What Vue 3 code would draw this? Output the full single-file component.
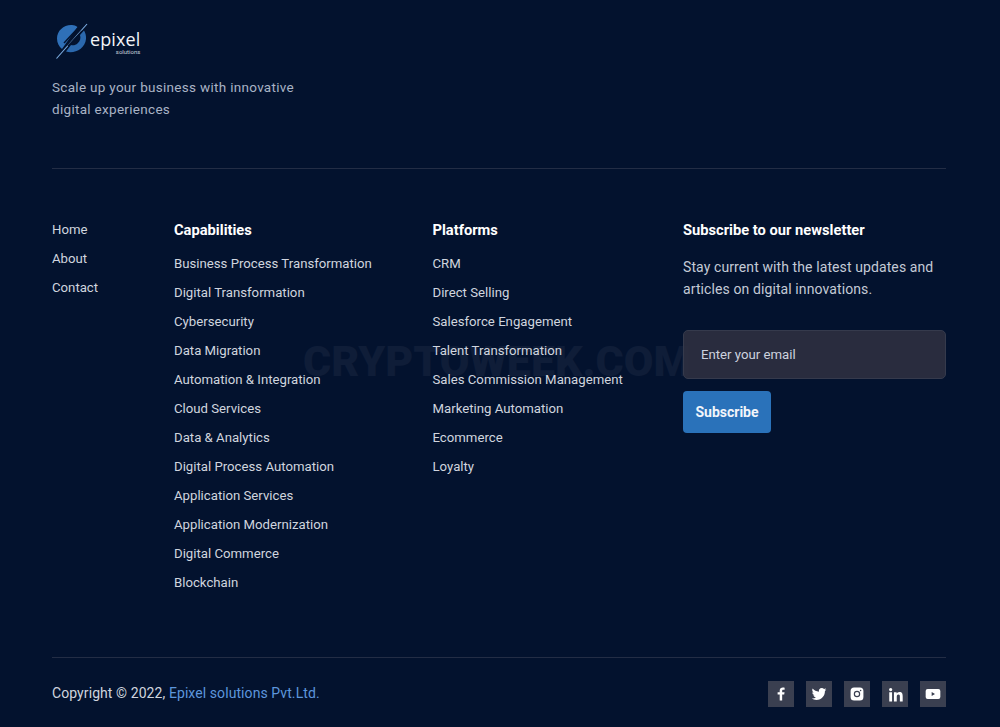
<script setup>
const mainLinks = ['Home', 'About', 'Contact']
const capabilities = [
  'Business Process Transformation',
  'Digital Transformation',
  'Cybersecurity',
  'Data Migration',
  'Automation & Integration',
  'Cloud Services',
  'Data & Analytics',
  'Digital Process Automation',
  'Application Services',
  'Application Modernization',
  'Digital Commerce',
  'Blockchain'
]
const platforms = [
  'CRM',
  'Direct Selling',
  'Salesforce Engagement',
  'Talent Transformation',
  'Sales Commission Management',
  'Marketing Automation',
  'Ecommerce',
  'Loyalty'
]
</script>

<template>
  <footer class="footer">
    <div class="watermark">CRYPTOWEEK.COM</div>

    <div class="brand">
      <div class="logo">
        <svg class="logo-mark" width="36" height="38" viewBox="0 0 36 38">
          <path d="M16 3C8 2.500 1 8.500 1 16.500c0 4.500 2 8 5 10.500L21.500 5C20 3.800 18 3.100 16 3z" fill="#2f70b8" />
          <path d="M10 29.500c8.500 2.500 19-2.500 20-12.500.3-3.300-.5-6-2-8.500L24 13c1 3 .2 6-2.300 8.300-2 2-4.700 2.400-6.700 1.700z" fill="#2b68ad" />
          <path d="M.5 36.500L31 2" stroke="#7fb0e6" stroke-width="1.100" fill="none" />
          <path d="M8 21L22 6" stroke="#03122e" stroke-width="1.500" fill="none" />
          <path d="M12 24L26 9" stroke="#03122e" stroke-width="1.300" fill="none" />
        </svg>
        <div class="logo-text">
          <span class="logo-name">epixel</span>
          <span class="logo-sub">solutions</span>
        </div>
      </div>
      <p class="tagline">Scale up your business with innovative<br />digital experiences</p>
    </div>

    <div class="columns">
      <ul class="col-main">
        <li v-for="link in mainLinks" :key="link">{{ link }}</li>
      </ul>

      <div class="col-capabilities">
        <h4>Capabilities</h4>
        <ul>
          <li v-for="item in capabilities" :key="item">{{ item }}</li>
        </ul>
      </div>

      <div class="col-platforms">
        <h4>Platforms</h4>
        <ul>
          <li v-for="item in platforms" :key="item">{{ item }}</li>
        </ul>
      </div>

      <div class="col-news">
        <h4>Subscribe to our newsletter</h4>
        <p>Stay current with the latest updates and articles on digital innovations.</p>
        <input class="email" type="text" placeholder="Enter your email" />
        <button class="subscribe" type="button">Subscribe</button>
      </div>
    </div>

    <div class="bottom">
      <div class="copyright">Copyright © 2022, <a>Epixel solutions Pvt.Ltd.</a></div>
      <div class="socials">
        <span class="social">
          <svg width="14" height="14" viewBox="0 0 24 24" fill="#fff"><path d="M14 23v-10h3.500l.6-4H14V6.500C14 5.300 14.400 4.600 16 4.600h2.200V1.100C17.700 1 16.500 1 15.200 1 12 1 9.800 3 9.800 6.200V9H6.200v4h3.600v10z" /></svg>
        </span>
        <span class="social">
          <svg width="16" height="16" viewBox="0 0 24 24" fill="#fff"><path d="M23 5.100c-.8.4-1.700.6-2.600.7.900-.6 1.700-1.400 2-2.500-.9.500-1.900.9-2.900 1.100a4.500 4.500 0 0 0-7.700 4.100C8 8.300 4.700 6.500 2.500 3.800c-1.200 2.100-.6 4.700 1.400 6-.7 0-1.400-.2-2-.6 0 2.200 1.500 4.100 3.600 4.500-.7.200-1.400.2-2 .1.600 1.800 2.200 3.100 4.200 3.100A9.100 9.100 0 0 1 1 18.800 12.900 12.900 0 0 0 8 20.900c8.400 0 13.200-7.100 12.900-13.500.9-.6 1.600-1.400 2.100-2.300z" /></svg>
        </span>
        <span class="social">
          <svg width="14" height="14" viewBox="0 0 24 24"><path fill="#fff" fill-rule="evenodd" d="M7 1h10a6 6 0 0 1 6 6v10a6 6 0 0 1-6 6H7a6 6 0 0 1-6-6V7a6 6 0 0 1 6-6zm5 5.500a5.500 5.500 0 1 0 0 11 5.500 5.500 0 0 0 0-11zm0 2a3.500 3.500 0 1 1 0 7 3.500 3.500 0 0 1 0-7zM18.200 4.500a1.300 1.300 0 1 0 0 2.600 1.300 1.300 0 0 0 0-2.600z" /></svg>
        </span>
        <span class="social">
          <svg width="15" height="15" viewBox="0 0 24 24" fill="#fff"><path d="M2 8.500h4.500V23H2zM4.250 1.500a2.600 2.600 0 1 1 0 5.200 2.600 2.600 0 0 1 0-5.200zM9.500 8.500h4.300v2c.7-1.200 2.200-2.400 4.500-2.400 4.600 0 5.200 3 5.200 7V23H19v-7c0-1.700 0-3.900-2.300-3.900S14 13.900 14 15.900V23H9.500z" /></svg>
        </span>
        <span class="social">
          <svg width="16" height="16" viewBox="0 0 24 24"><path fill="#fff" fill-rule="evenodd" d="M4 4.500h16a3 3 0 0 1 3 3v9a3 3 0 0 1-3 3H4a3 3 0 0 1-3-3v-9a3 3 0 0 1 3-3zM10 9v6l5-3z" /></svg>
        </span>
      </div>
    </div>
  </footer>
</template>

<style scoped>
.footer {
  position: relative;
  width: 1000px;
  height: 727px;
  box-sizing: border-box;
  padding: 22px 54px 0 52px;
  background: #03122e;
  color: #d0d5df;
  font-family: Roboto, "Liberation Sans", sans-serif;
  overflow: hidden;
}

ul {
  margin: 0;
  padding: 0;
  list-style: none;
}

.watermark {
  position: absolute;
  left: 303px;
  top: 331px;
  font-size: 43px;
  line-height: 60px;
  font-weight: 900;
  color: #0f1d38;
  white-space: nowrap;
}

.brand {
  position: relative;
  height: 146px;
  border-bottom: 1px solid #232d45;
}

.logo {
  display: flex;
  align-items: flex-start;
  padding-left: 4px;
}

.logo-mark {
  flex: none;
}

.logo-text {
  display: flex;
  flex-direction: column;
  margin: 8px 0 0 -2px;
  color: #f2f4f8;
}

.logo-name {
  font-family: "Open Sans", sans-serif;
  font-size: 18px;
  line-height: 19px;
  letter-spacing: .1px;
}

.logo-sub {
  align-self: flex-end;
  font-size: 6px;
  line-height: 6px;
  color: #c9d0dc;
}

.tagline {
  margin: 16px 0 0;
  font-size: 13.500px;
  line-height: 22px;
  letter-spacing: .3px;
  color: #a9b3c5;
}

.columns {
  position: relative;
  display: grid;
  grid-template-columns: 122px 258.500px 250.500px 263px;
  height: 489px;
  box-sizing: border-box;
  padding-top: 52px;
  border-bottom: 1px solid #232d45;
}

h4 {
  margin: 0;
  font-size: 14.700px;
  line-height: 18px;
  font-weight: 700;
  color: #fff;
}

.col-main {
  margin-top: -6px;
}

.col-main li {
  font-size: 13.200px;
  line-height: 29px;
  height: 29px;
}

.col-capabilities ul,
.col-platforms ul {
  margin-top: 15px;
}

.col-capabilities li,
.col-platforms li {
  font-size: 13.200px;
  line-height: 20px;
  height: 29px;
}

.col-news p {
  margin: 17px 0 0;
  font-size: 14px;
  line-height: 22px;
  letter-spacing: .1px;
  color: #c4cad6;
}

.email {
  display: block;
  width: 263px;
  height: 49px;
  box-sizing: border-box;
  margin-top: 30px;
  padding: 0 17px;
  background: rgba(44, 46, 64, .93);
  border: 1px solid #353a4c;
  border-radius: 5px;
  font-family: inherit;
  font-size: 13.200px;
  color: #d0d5df;
  outline: none;
}

.email::placeholder {
  color: #cdd2df;
  opacity: 1;
}

.subscribe {
  display: block;
  width: 88px;
  height: 42px;
  margin-top: 12px;
  padding: 0;
  background: #2a72ba;
  border: none;
  border-radius: 4px;
  font-family: inherit;
  font-size: 14px;
  font-weight: 700;
  color: #f2f5fa;
}

.bottom {
  position: relative;
  display: flex;
  justify-content: space-between;
  align-items: center;
  height: 72px;
}

.copyright {
  padding-bottom: 2px;
  font-size: 14px;
  letter-spacing: .08px;
}

.copyright a {
  color: #5d96dc;
}

.socials {
  display: flex;
  gap: 12px;
}

.social {
  display: flex;
  align-items: center;
  justify-content: center;
  width: 26px;
  height: 26px;
  background: #3a3f50;
}
</style>

<style>
html, body {
  margin: 0;
  background: #03122e;
}
</style>
